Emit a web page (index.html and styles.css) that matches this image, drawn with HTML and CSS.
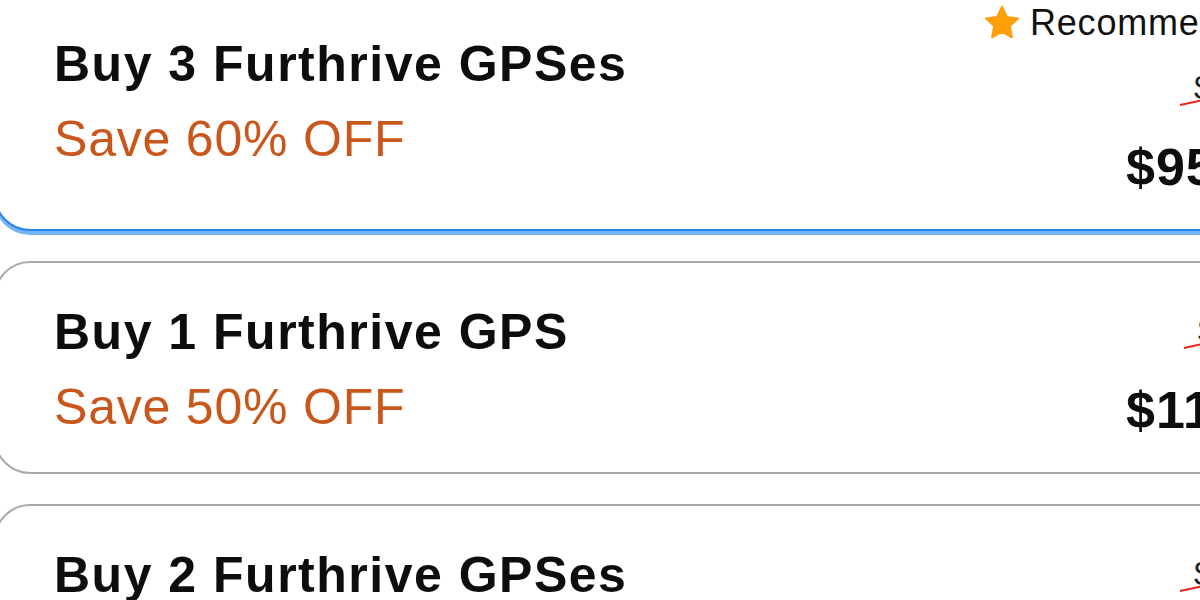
FILE: index.html
```html
<!DOCTYPE html>
<html lang="en">
<head>
<meta charset="utf-8">
<title>Furthrive GPS bundles</title>
<link rel="stylesheet" href="styles.css">
</head>
<body>
<div class="list">
  <div class="card card--featured">
    <div class="badge">
      <svg class="star" viewBox="0 0 24 24" aria-hidden="true"><path d="M12 1.6l3.1 6.6 7.1.9-5.2 4.9 1.3 7.1L12 17.6l-6.3 3.5L7 14 1.8 9.1l7.1-.9z" fill="#ff9f0a" stroke="#ff9f0a" stroke-width="1.2" stroke-linejoin="round"/></svg>
      <span class="badge-text">Recommended</span>
    </div>
    <div class="info">
      <div class="title">Buy 3 Furthrive GPSes</div>
      <div class="save">Save 60% OFF</div>
    </div>
    <div class="prices">
      <div class="old"><span class="old-text">$299.97</span></div>
      <div class="new">$95.99</div>
    </div>
  </div>
  <div class="card">
    <div class="info">
      <div class="title">Buy 1 Furthrive GPS</div>
      <div class="save">Save 50% OFF</div>
    </div>
    <div class="prices">
      <div class="old old--short"><span class="old-text">$79.99</span></div>
      <div class="new">$119.99</div>
    </div>
  </div>
  <div class="card">
    <div class="info">
      <div class="title">Buy 2 Furthrive GPSes</div>
      <div class="save">Save 55% OFF</div>
    </div>
    <div class="prices">
      <div class="old"><span class="old-text">$199.98</span></div>
      <div class="new">$89.99</div>
    </div>
  </div>
</div>
</body>
</html>
```

FILE: styles.css
```css
html, body {
  margin: 0;
  padding: 0;
  background: #ffffff;
  overflow: hidden;
  height: 600px;
}

body {
  font-family: "Liberation Sans", Arial, sans-serif;
  color: #111111;
}

.list {
  display: flex;
  flex-direction: column;
  gap: 30px;
  margin-top: -40px;
  margin-left: -6px;
  width: 1500px;
}

.card {
  position: relative;
  display: grid;
  grid-template-columns: 1072px 1fr;
  align-items: start;
  padding: 39px 0 34px 58px;
  border: 2px solid #aaaaaa;
  border-radius: 36px;
  background: #ffffff;
}

.card--featured {
  border-color: #2a84ec;
  box-shadow: 0 4px 0 #74b5f8;
  padding-top: 72px;
  padding-bottom: 34px;
}

.badge {
  position: absolute;
  top: 41px;
  left: 987px;
  display: flex;
  align-items: center;
  gap: 9px;
  height: 40px;
  background: #ffffff;
}

.star {
  width: 38px;
  height: 38px;
  display: block;
}

.badge-text {
  font-size: 36px;
  line-height: 40px;
  color: #111111;
  letter-spacing: 0.8px;
}

.info {
  display: flex;
  flex-direction: column;
  gap: 15px;
}

.title {
  font-size: 50px;
  line-height: 60px;
  font-weight: 700;
  letter-spacing: 1.5px;
  color: #0d0d0d;
  white-space: nowrap;
}

.save {
  font-size: 50px;
  line-height: 60px;
  letter-spacing: 0.8px;
  color: #c9561a;
  white-space: nowrap;
}

.prices {
  display: flex;
  flex-direction: column;
  align-items: flex-start;
  gap: 32px;
  margin-top: 8px;
}

.card--featured .prices {
  margin-top: 33px;
}

.old {
  font-size: 34px;
  line-height: 40px;
  color: #222222;
  padding-left: 68px;
  white-space: nowrap;
}

.old--short {
  padding-left: 72px;
}

.old-text {
  position: relative;
  display: inline-block;
}

.old-text::after {
  content: "";
  position: absolute;
  left: -14px;
  top: 37px;
  width: 140px;
  height: 2px;
  background: #e8231f;
  transform: rotate(-12deg);
  transform-origin: left center;
}

.new {
  font-size: 52px;
  line-height: 56px;
  font-weight: 700;
  letter-spacing: 1px;
  color: #0d0d0d;
  white-space: nowrap;
}
```
